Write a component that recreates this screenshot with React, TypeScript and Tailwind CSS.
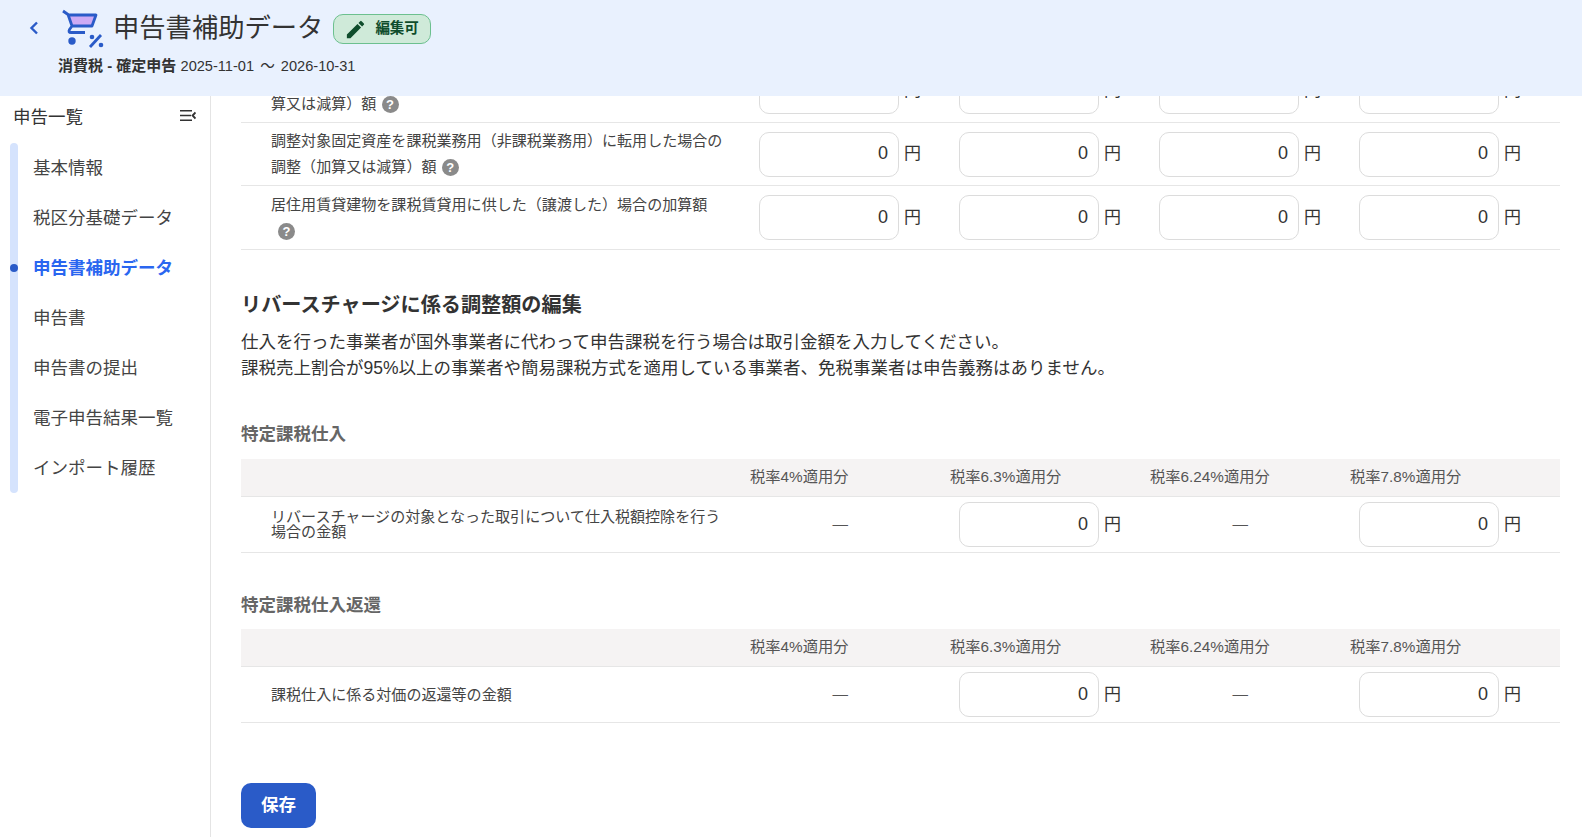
import React from 'react';

const NAV = ['基本情報', '税区分基礎データ', '申告書補助データ', '申告書', '申告書の提出', '電子申告結果一覧', 'インポート履歴'];
const RATES = ['税率4%適用分', '税率6.3%適用分', '税率6.24%適用分', '税率7.8%適用分'];

const Help = ({ className = '' }: { className?: string }) => (
  <span className={`inline-flex h-[17px] w-[17px] items-center justify-center rounded-full bg-[#8a8a8a] align-[0px] text-[13px] font-bold leading-none text-white ${className}`}>
    ?
  </span>
);

const Amount = ({ value = '0' }: { value?: string }) => (
  <div className="flex w-[200px] items-center">
    <div className="flex h-[45px] w-[140px] items-center justify-end rounded-[10px] border border-[#dcdcdc] bg-white pb-[1px] pr-[10px] text-[18px] text-[#333]">
      {value}
    </div>
    <span className="ml-[5px] text-[17px] text-[#333]">円</span>
  </div>
);

const Dash = () => (
  <div className="flex w-[200px] justify-end pb-[2px] pr-[111px] text-[15.5px] text-[#555]">—</div>
);

const Row = ({ children, cells, className = '' }: { children: React.ReactNode; cells: React.ReactNode; className?: string }) => (
  <div className={`flex items-center border-b border-[#e6e6e6] ${className}`}>
    <div className="w-[518px] pl-[30px] pr-[28px] text-[15.05px] text-[#444]">{children}</div>
    {cells}
  </div>
);

const TaxTable = ({ title, label, tight, className = '', bandClass = 'mt-[12px]' }: { title: string; label: string; tight?: boolean; className?: string; bandClass?: string }) => (
  <section className={`shrink-0 ${className}`}>
    <h3 className="text-[17.5px] font-bold leading-[26px] text-[#666]">{title}</h3>
    <div className={`flex h-[38px] items-center border-b border-[#e6e6e6] bg-[#f5f3f3] text-[15.3px] text-[#555] ${bandClass}`}>
      <div className="w-[509px]" />
      {RATES.map((r) => (
        <div key={r} className="w-[200px]">
          {r}
        </div>
      ))}
    </div>
    <Row
      className="h-[56px]"
      cells={
        <>
          <Dash />
          <Amount />
          <Dash />
          <Amount />
        </>
      }
    >
      <div className={tight ? 'pb-[2px] leading-[15px]' : 'leading-[22px]'}>{label}</div>
    </Row>
  </section>
);

const four = (
  <>
    <Amount />
    <Amount />
    <Amount />
    <Amount />
  </>
);

export default function App() {
  return (
    <div className="flex h-[837px] w-[1582px] flex-col overflow-hidden bg-white font-['Liberation_Sans','Noto_Sans_CJK_JP',sans-serif]">
      <header className="relative z-10 h-[96px] shrink-0 bg-[#e9f1fe] pl-[58px]">
        <div className="flex h-[54px] items-start">
          <svg className="ml-[-30px] mt-[20px]" width="12" height="16" viewBox="0 0 12 16" fill="none">
            <path d="M9 2.5 3.5 8 9 13.5" stroke="#2a5bc8" strokeWidth="2.4" />
          </svg>
          <svg width="44" height="42" viewBox="0 0 44 42" className="ml-[21px] mt-[8px]" fill="none">
            <path d="M7 7h28l-4 11H11z" fill="#cdaaf5" />
            <path d="M2 3l5 3.5 4 11.5h20l4-11H7M11 18l-2.5 3.5Q7 24.5 10 24.5h14" stroke="#2a5bc8" strokeWidth="2.8" strokeLinejoin="round" />
            <circle cx="11" cy="33" r="3.7" fill="#2a5bc8" />
            <path d="M40 27 29 39" stroke="#2a5bc8" strokeWidth="2.8" />
            <circle cx="31" cy="29" r="2.3" fill="#2a5bc8" />
            <circle cx="40" cy="37" r="2.3" fill="#2a5bc8" />
          </svg>
          <h1 className="ml-[8px] mt-[9px] text-[26.3px] font-normal leading-[38px] text-[#333]">申告書補助データ</h1>
          <div className="ml-[10px] mt-[14px] flex h-[30px] w-[98px] items-center rounded-[10px] border border-[#6cc08f] bg-[#cfead9] pl-[10px]">
            <svg width="23" height="23" viewBox="0 0 24 24" fill="#0f4d2c">
              <path d="M3 17.25V21h3.75L17.81 9.94l-3.75-3.75L3 17.25zM20.71 7.04a1 1 0 0 0 0-1.41l-2.34-2.34a1 1 0 0 0-1.41 0l-1.83 1.83 3.75 3.75 1.83-1.83z" />
            </svg>
            <span className="ml-[8px] text-[14.5px] font-bold text-[#0f4d2c]">編集可</span>
          </div>
        </div>
        <p className="text-[15px] leading-[24px] text-[#333]">
          <span className="font-bold">消費税 - 確定申告</span>{' '}
          <span className="text-[14.6px]">
            2025-11-01 <span className="mx-[2px]">〜</span> 2026-10-31
          </span>
        </p>
      </header>

      <div className="flex min-h-0 flex-1">
        <aside className="w-[211px] shrink-0 border-r border-[#e4e4e4] pl-[10px]">
          <div className="flex h-[37px] items-end justify-between pb-[3px] pl-[3px] pr-[14px] text-[17.5px] text-[#333]">
            <span>申告一覧</span>
            <svg width="16" height="11" viewBox="0 0 16 11" className="mb-[9px]" fill="none" stroke="#333">
              <path d="M0 .8h12M0 5.5h11M0 10.2h12" strokeWidth="1.4" />
              <path d="M15.5 2.5 12.6 5.5l2.9 3" strokeWidth="1.9" />
            </svg>
          </div>
          <div className="relative mt-[10px] w-[8px] rounded-full bg-[#d5e3fd]">
            <nav className="flex w-[190px] flex-col">
              {NAV.map((n, i) => (
                <div
                  key={n}
                  className={`relative flex h-[50px] items-center pl-[23px] text-[17.5px] ${i === 2 ? 'font-bold text-[#2a66f0]' : 'text-[#444]'}`}
                >
                  {i === 2 && <span className="absolute left-0 h-[8px] w-[8px] rounded-full bg-[#2a5bc8]" />}
                  {n}
                </div>
              ))}
            </nav>
          </div>
        </aside>

        <main className="flex min-w-0 flex-1 flex-col justify-end overflow-hidden pb-[9px] pl-[30px] pr-[22px]">
          <Row className="h-[63px] shrink-0" cells={four}>
            <div className="leading-[26px]">
              調整対象固定資産を非課税業務用に転用した場合の調整（加
              <br />
              算又は減算）額 <Help className="ml-[1px]" />
            </div>
          </Row>
          <Row className="h-[63px] shrink-0" cells={four}>
            <div className="leading-[26px]">
              調整対象固定資産を課税業務用（非課税業務用）に転用した場合の調整（加算又は減算）額 <Help className="ml-[1px]" />
            </div>
          </Row>
          <Row className="h-[64px] shrink-0" cells={four}>
            <div className="leading-[26px]">
              居住用賃貸建物を課税賃貸用に供した（譲渡した）場合の加算額
              <br />
              <Help className="ml-[7px]" />
            </div>
          </Row>

          <h2 className="mt-[40px] shrink-0 text-[20.15px] font-bold leading-[30px] text-[#333]">リバースチャージに係る調整額の編集</h2>
          <p className="mt-[9px] shrink-0 text-[17.5px] leading-[26px] text-[#333]">
            仕入を行った事業者が国外事業者に代わって申告課税を行う場合は取引金額を入力してください。
            <br />
            課税売上割合が95%以上の事業者や簡易課税方式を適用している事業者、免税事業者は申告義務はありません。
          </p>

          <TaxTable className="mt-[40px]" title="特定課税仕入" label="リバースチャージの対象となった取引について仕入税額控除を行う場合の金額" tight />
          <TaxTable className="mt-[39px]" bandClass="mt-[11px]" title="特定課税仕入返還" label="課税仕入に係る対価の返還等の金額" />

          <button className="mt-[60px] h-[45px] w-[75px] shrink-0 rounded-[10px] bg-[#2a5bc8] text-[17.5px] font-bold text-white">保存</button>
        </main>
      </div>
    </div>
  );
}
